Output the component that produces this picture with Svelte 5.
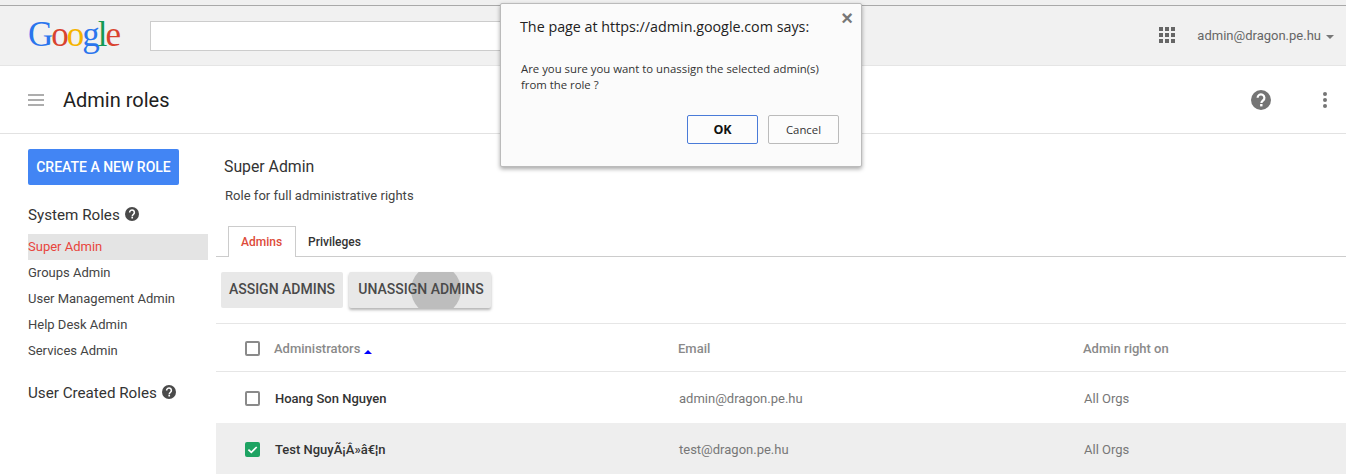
<script>
  const systemRoles = ['Super Admin', 'Groups Admin', 'User Management Admin', 'Help Desk Admin', 'Services Admin'];
  const admins = [
    { name: 'Hoang Son Nguyen', email: 'admin@dragon.pe.hu', on: 'All Orgs', checked: false },
    { name: 'Test NguyÃ¡Â»â€¦n', email: 'test@dragon.pe.hu', on: 'All Orgs', checked: true }
  ];
</script>

{#snippet help(size)}
  <svg class="help" width={size} height={size} viewBox="0 0 20 20">
    <circle cx="10" cy="10" r="10" fill="currentColor" />
    <path d="M6.6 7.8a3.4 3.4 0 1 1 5.4 2.7c-1.2.9-1.6 1.3-1.6 2.6" fill="none" stroke="#fff" stroke-width="2.2" />
    <rect x="9.1" y="14" width="2.4" height="2.4" fill="#fff" />
  </svg>
{/snippet}

{#snippet checkbox(checked)}
  {#if checked}
    <svg class="check" width="15" height="15" viewBox="0 0 15 15">
      <rect width="15" height="15" rx="2" fill="#1da362" />
      <path d="M3.4 7.6l2.9 2.8 5.4-5.4" fill="none" stroke="#fff" stroke-width="1.7" />
    </svg>
  {:else}
    <span class="check empty"></span>
  {/if}
{/snippet}

<div class="page">
  <div class="chrome"></div>

  <header class="topbar">
    <div class="logo"><span class="b">G</span><span class="r">o</span><span class="y">o</span><span class="b">g</span><span class="g">l</span><span class="r">e</span></div>
    <div class="search"></div>
    <div class="account">
      <svg class="apps" width="16" height="16" viewBox="0 0 16 16" fill="#666">
        {#each [0, 6, 12] as y}
          {#each [0, 6, 12] as x}
            <rect {x} {y} width="4" height="4" />
          {/each}
        {/each}
      </svg>
      <span class="user">admin@dragon.pe.hu</span>
      <span class="caret"></span>
    </div>
  </header>

  <div class="titlebar">
    <svg class="menu" width="16" height="12" viewBox="0 0 16 12" fill="#adadad">
      <rect width="16" height="2" y="0" />
      <rect width="16" height="2" y="5" />
      <rect width="16" height="2" y="10" />
    </svg>
    <h1>Admin roles</h1>
    <div class="title-actions">
      <span class="title-help">{@render help(20)}</span>
      <svg width="6" height="16" viewBox="0 0 6 16" fill="#757575">
        <circle cx="3" cy="2" r="2" />
        <circle cx="3" cy="8" r="2" />
        <circle cx="3" cy="14" r="2" />
      </svg>
    </div>
  </div>

  <div class="content">
    <aside class="sidebar">
      <button class="create">CREATE A NEW ROLE</button>
      <h3 class="first">System Roles {@render help(14)}</h3>
      <ul>
        {#each systemRoles as role, i}
          <li class:active={i === 0}>{role}</li>
        {/each}
      </ul>
      <h3 class="second">User Created Roles {@render help(14)}</h3>
    </aside>

    <main>
      <div class="role-head">
        <h2>Super Admin</h2>
        <p>Role for full administrative rights</p>
      </div>

      <div class="tabs">
        <span class="tab selected">Admins</span>
        <span class="tab">Privileges</span>
      </div>

      <div class="actions">
        <button class="action">ASSIGN ADMINS</button>
        <button class="action pressed"><span class="ripple"></span><span class="label">UNASSIGN ADMINS</span></button>
      </div>

      <div class="row head">
        <div class="c-check">{@render checkbox(false)}</div>
        <div class="c-name">Administrators <span class="sort"></span></div>
        <div class="c-email">Email</div>
        <div class="c-on">Admin right on</div>
      </div>
      {#each admins as a}
        <div class="row item" class:sel={a.checked}>
          <div class="c-check">{@render checkbox(a.checked)}</div>
          <div class="c-name">{a.name}</div>
          <div class="c-email">{a.email}</div>
          <div class="c-on">{a.on}</div>
        </div>
      {/each}
    </main>
  </div>

  <div class="dialog">
    <span class="close">×</span>
    <div class="says">The page at https://admin.google.com says:</div>
    <div class="msg">Are you sure you want to unassign the selected admin(s)<br />from the role ?</div>
    <div class="buttons">
      <button class="ok">OK</button>
      <button class="cancel">Cancel</button>
    </div>
  </div>
</div>

<style>
  :global(body) { margin: 0; background: #fff; }

  .page {
    position: relative;
    width: 1346px;
    height: 474px;
    overflow: hidden;
    font-family: Roboto, "Liberation Sans", sans-serif;
    color: #333;
  }

  .chrome {
    height: 5px;
    background: #f0f0f0;
    border-bottom: 1px solid #a9a9a9;
  }

  .topbar {
    height: 59px;
    background: #f1f1f1;
    border-bottom: 1px solid #e5e5e5;
    display: flex;
    align-items: center;
    padding: 0 12px 0 28px;
  }
  .logo {
    width: 122px;
    font-family: "Liberation Serif", serif;
    font-size: 35px;
    letter-spacing: -2px;
    line-height: 1;
    margin-top: -2px;
  }
  .b { color: #2a75ed; }
  .r { color: #d9432f; }
  .y { color: #f5b400; }
  .g { color: #139a55; }
  .search {
    width: 700px;
    height: 28px;
    background: #fff;
    border: 1px solid #ccc;
  }
  .account {
    margin-left: auto;
    display: flex;
    align-items: center;
    font-family: Roboto, sans-serif;
    font-size: 13px;
    color: #666;
  }
  .apps { margin-right: 22px; margin-top: -1px; }
  .user { margin-right: 5px; }
  .caret {
    width: 0;
    height: 0;
    border-left: 4px solid transparent;
    border-right: 4px solid transparent;
    border-top: 4px solid #777;
    margin-top: 2px;
  }

  .titlebar {
    height: 67px;
    border-bottom: 1px solid #e2e2e2;
    display: flex;
    align-items: center;
    padding: 0 18px 0 28px;
  }
  h1 {
    margin: 0 0 0 19px;
    font-size: 20px;
    font-weight: 400;
    color: #212121;
  }
  .title-actions {
    margin-left: auto;
    display: flex;
    align-items: center;
    gap: 51px;
  }
  .title-help { color: #757575; display: flex; }
  .help { vertical-align: -1px; }

  .content { display: flex; }

  .sidebar { width: 180px; padding: 15px 0 0 28px; flex: none; }
  .create {
    width: 151px;
    height: 36px;
    padding: 0 0 1px;
    border: none;
    border-radius: 2px;
    background: #4285f4;
    color: #fff;
    font-family: inherit;
    font-size: 14px;
    font-weight: 500;
    display: block;
  }
  h3 {
    margin: 0;
    font-size: 15.2px;
    font-weight: 400;
    color: #333;
    line-height: 18px;
  }
  h3 .help { color: #4a4a4a; margin-left: 1px; }
  h3.first { margin-top: 21px; }
  h3.second { margin-top: 20px; }
  ul { list-style: none; margin: 10px 0 0; padding: 0; }
  li {
    height: 26px;
    line-height: 26px;
    font-size: 13px;
    color: #444;
  }
  li.active { background: #e4e4e4; color: #e8453c; }

  main { flex: 1; margin-left: 8px; min-width: 0; }

  .role-head { padding: 24px 0 0 8px; }
  h2 { margin: 0; font-size: 15.8px; font-weight: 400; color: #333; line-height: 18px; }
  .role-head p { margin: 12px 0 0 1px; font-size: 13px; letter-spacing: .002em; line-height: 16px; color: #444; }

  .tabs {
    display: flex;
    height: 30px;
    margin-top: 22px;
    padding-left: 12px;
    border-bottom: 1px solid #ccc;
    font-size: 12px;
    font-weight: 500;
    line-height: 30px;
  }
  .tab { padding: 1px 13px 0 12px; color: #333; }
  .tab.selected {
    height: 30px;
    padding-top: 0;
    color: #dd4b39;
    border: 1px solid #ccc;
    border-bottom: none;
    background: #fff;
  }

  .actions {
    display: flex;
    gap: 6px;
    height: 67px;
    padding: 15px 0 0 5px;
    box-sizing: border-box;
    border-bottom: 1px solid #e6e6e6;
  }
  .action {
    height: 36px;
    padding: 0 0 2px;
    width: 122px;
    border: none;
    border-radius: 2px;
    background: #e8e8e8;
    color: #4a4a4a;
    font-family: inherit;
    font-size: 14px;
    font-weight: 500;
  }
  .pressed {
    width: 142px;
    padding-left: 2px;
    position: relative;
    overflow: hidden;
    box-shadow: 0 2px 3px rgba(0, 0, 0, .3);
  }
  .label { position: relative; }
  .ripple {
    position: absolute;
    left: 62px;
    top: -7px;
    width: 50px;
    height: 50px;
    border-radius: 50%;
    background: #bdbdbd;
  }

  .row {
    display: flex;
    align-items: center;
    font-size: 13px;
    color: #777;
    box-sizing: border-box;
  }
  .row.head { height: 48px; padding-top: 1px; border-bottom: 1px solid #e6e6e6; font-weight: 500; color: #8a8a8a; }
  .row.item { height: 51px; padding-top: 2px; }
  .row.sel { background: #eee; }
  .c-check { width: 58px; padding-left: 29px; box-sizing: border-box; display: flex; flex: none; }
  .c-name { width: 404px; flex: none; }
  .row.item .c-name { font-weight: 500; color: #333; padding-left: 1px; box-sizing: border-box; }
  .c-email { width: 405px; flex: none; }
  .row.item .c-email { padding-left: 1px; box-sizing: border-box; font-weight: 400; }
  .row.item .c-on { padding-left: 1px; }
  .check { width: 15px; height: 15px; display: block; box-sizing: border-box; }
  .check.empty { border: 2px solid #8a8a8a; border-radius: 2px; background: #fff; }
  .sort {
    display: inline-block;
    width: 0;
    height: 0;
    border-left: 4px solid transparent;
    border-right: 4px solid transparent;
    border-bottom: 4px solid #00f;
    vertical-align: -1px;
  }

  .dialog {
    position: absolute;
    left: 500px;
    top: 3px;
    width: 362px;
    height: 164px;
    box-sizing: border-box;
    background: #fbfbfb;
    border: 1px solid #bbb;
    border-radius: 2px;
    box-shadow: 0 2px 4px rgba(0, 0, 0, .35);
    padding: 13px 19px 0;
    font-family: "Open Sans", "Liberation Sans", sans-serif;
    color: #333;
  }
  .close {
    position: absolute;
    right: 8px;
    top: 3px;
    font-family: "Liberation Sans", sans-serif;
    font-size: 20px;
    line-height: 22px;
    font-weight: 700;
    color: #777;
  }
  .says { font-size: 14.3px; line-height: 20px; color: #222; }
  .msg { margin: 24px 0 0 1px; font-size: 11.35px; line-height: 16px; }
  .buttons {
    display: flex;
    justify-content: flex-end;
    gap: 10px;
    margin-top: 22px;
    margin-right: 3px;
  }
  .buttons button {
    width: 71px;
    height: 29px;
    padding: 0;
    background: #fcfcfc;
    border: 1px solid #bbb;
    border-radius: 2px;
    font-family: inherit;
    font-size: 11.35px;
    color: #333;
  }
  .buttons .ok { border-color: #4a7bd8; font-weight: 700; font-size: 12.5px; color: #111; }
</style>
